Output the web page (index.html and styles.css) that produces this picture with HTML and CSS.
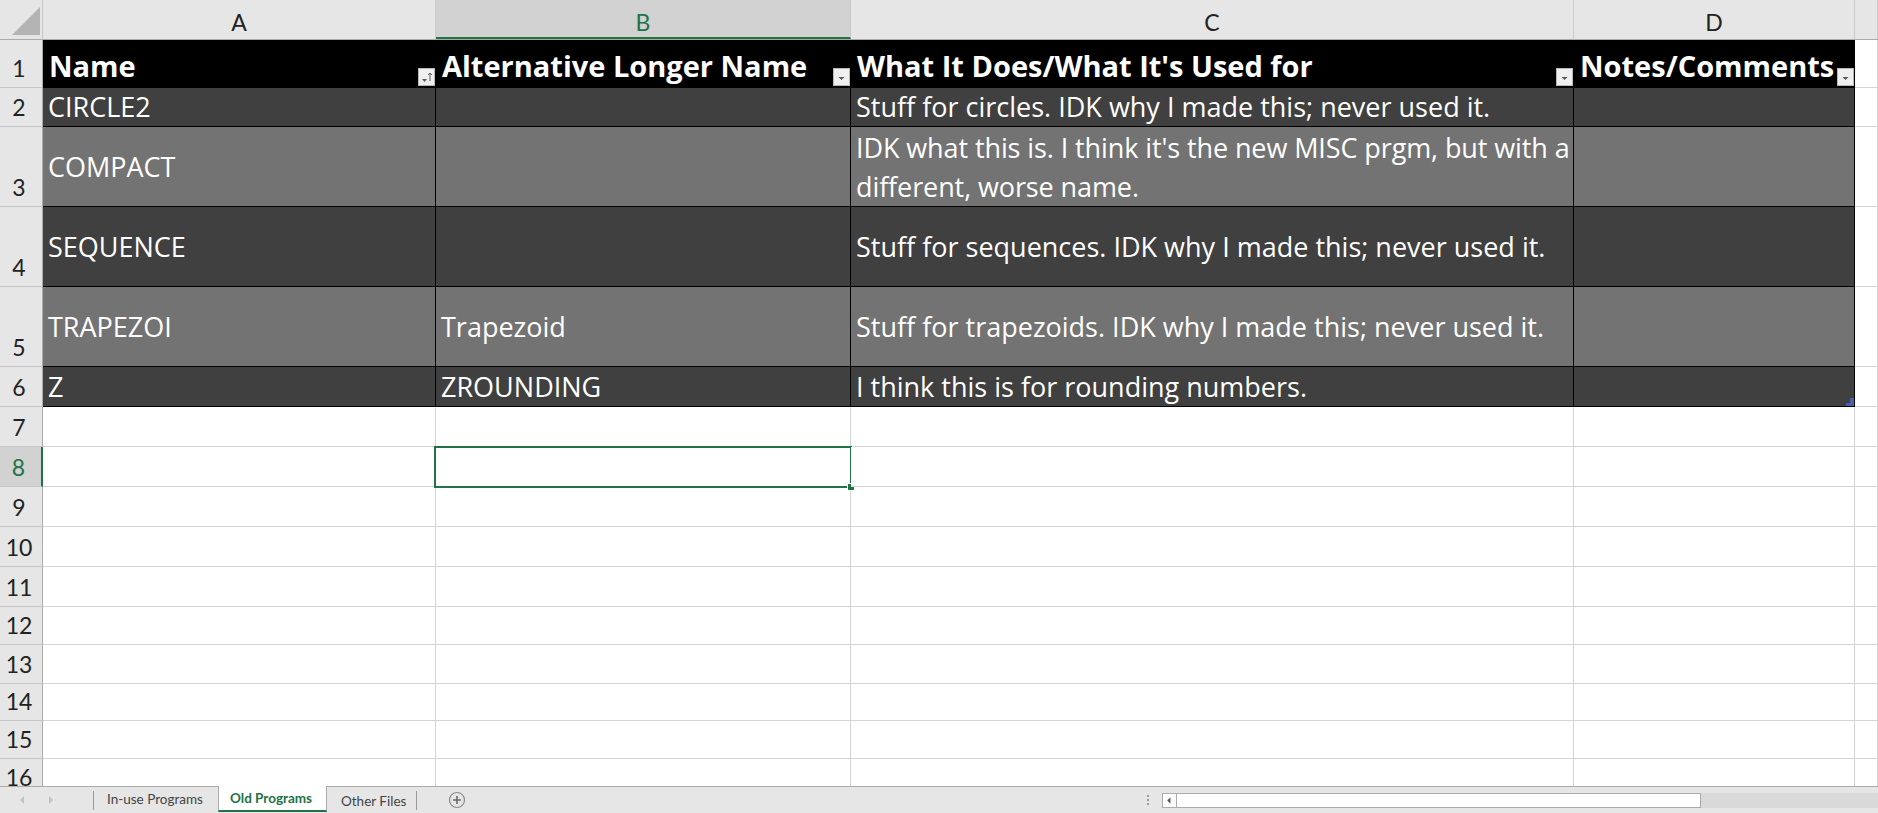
FILE: index.html
```html
<!DOCTYPE html>
<html>
<head>
<meta charset="utf-8">
<title>Old Programs</title>
<link rel="stylesheet" href="styles.css">
</head>
<body>
<div class="app">
  <div class="colheads">
    <div class="corner"><svg width="43" height="39" viewBox="0 0 43 39"><polygon points="12,35 40,35 40,7" fill="#b4b4b4"/></svg></div>
    <div class="ch">A</div>
    <div class="ch sel">B</div>
    <div class="ch">C</div>
    <div class="ch">D</div>
    <div class="ch"></div>
  </div>

  <div class="sheet">
    <div class="row h48">
      <div class="rh">1</div>
      <div class="c th">Name<span class="fbtn"><svg width="17" height="18" viewBox="0 0 17 18"><polygon points="4,11 9,11 6.5,14" fill="#5a5a5a"/><path d="M12 5 V13 M10 7 L12 5 L14 7" stroke="#5a5a5a" stroke-width="1" fill="none"/></svg></span></div>
      <div class="c th">Alternative Longer Name<span class="fbtn"><svg width="17" height="18" viewBox="0 0 17 18"><polygon points="5.5,9 11.5,9 8.5,12" fill="#5a5a5a"/></svg></span></div>
      <div class="c th">What It Does/What It's Used for<span class="fbtn"><svg width="17" height="18" viewBox="0 0 17 18"><polygon points="5.5,9 11.5,9 8.5,12" fill="#5a5a5a"/></svg></span></div>
      <div class="c th">Notes/Comments<span class="fbtn"><svg width="17" height="18" viewBox="0 0 17 18"><polygon points="5.5,9 11.5,9 8.5,12" fill="#5a5a5a"/></svg></span></div>
      <div class="c blank"></div>
    </div>

    <div class="row h39 dark">
      <div class="rh">2</div>
      <div class="c td">CIRCLE2</div>
      <div class="c td"></div>
      <div class="c td">Stuff for circles. IDK why I made this; never used it.</div>
      <div class="c td"></div>
      <div class="c blank"></div>
    </div>

    <div class="row h80 light mid">
      <div class="rh">3</div>
      <div class="c td">COMPACT</div>
      <div class="c td"></div>
      <div class="c td wrap"><p class="lines">IDK what this is. I think it's the new MISC prgm, but with a<br>different, worse name.</p></div>
      <div class="c td"></div>
      <div class="c blank"></div>
    </div>

    <div class="row h80 dark mid">
      <div class="rh">4</div>
      <div class="c td">SEQUENCE</div>
      <div class="c td"></div>
      <div class="c td">Stuff for sequences. IDK why I made this; never used it.</div>
      <div class="c td"></div>
      <div class="c blank"></div>
    </div>

    <div class="row h80 light mid">
      <div class="rh">5</div>
      <div class="c td">TRAPEZOI</div>
      <div class="c td">Trapezoid</div>
      <div class="c td">Stuff for trapezoids. IDK why I made this; never used it.</div>
      <div class="c td"></div>
      <div class="c blank"></div>
    </div>

    <div class="row h40 dark">
      <div class="rh">6</div>
      <div class="c td">Z</div>
      <div class="c td">ZROUNDING</div>
      <div class="c td">I think this is for rounding numbers.</div>
      <div class="c td"><span class="resize"><svg width="8" height="8" viewBox="0 0 8 8"><polygon points="4,0 8,0 8,8 0,8 0,5 4,5" fill="#4a5fb0"/></svg></span></div>
      <div class="c blank"></div>
    </div>

    <div class="row h40"><div class="rh">7</div><div class="c blank"></div><div class="c blank"></div><div class="c blank"></div><div class="c blank"></div><div class="c blank"></div></div>
    <div class="row h40"><div class="rh rsel">8</div><div class="c blank"></div><div class="c blank active"><span class="selbox"></span><span class="handle"></span></div><div class="c blank"></div><div class="c blank"></div><div class="c blank"></div></div>
    <div class="row h40"><div class="rh">9</div><div class="c blank"></div><div class="c blank"></div><div class="c blank"></div><div class="c blank"></div><div class="c blank"></div></div>
    <div class="row h40"><div class="rh">10</div><div class="c blank"></div><div class="c blank"></div><div class="c blank"></div><div class="c blank"></div><div class="c blank"></div></div>
    <div class="row h40"><div class="rh">11</div><div class="c blank"></div><div class="c blank"></div><div class="c blank"></div><div class="c blank"></div><div class="c blank"></div></div>
    <div class="row h38"><div class="rh">12</div><div class="c blank"></div><div class="c blank"></div><div class="c blank"></div><div class="c blank"></div><div class="c blank"></div></div>
    <div class="row h39"><div class="rh">13</div><div class="c blank"></div><div class="c blank"></div><div class="c blank"></div><div class="c blank"></div><div class="c blank"></div></div>
    <div class="row h37"><div class="rh">14</div><div class="c blank"></div><div class="c blank"></div><div class="c blank"></div><div class="c blank"></div><div class="c blank"></div></div>
    <div class="row h38"><div class="rh">15</div><div class="c blank"></div><div class="c blank"></div><div class="c blank"></div><div class="c blank"></div><div class="c blank"></div></div>
    <div class="row last"><div class="rh">16</div><div class="c blank"></div><div class="c blank"></div><div class="c blank"></div><div class="c blank"></div><div class="c blank"></div></div>
  </div>

  <div class="tabbar">
    <div class="nav">
      <svg width="93" height="26" viewBox="0 0 93 26"><polygon points="24,9 24,17 20,13" fill="#c4c4c4"/><polygon points="49,9 49,17 53,13" fill="#c4c4c4"/></svg>
    </div>
    <div class="tab t1">In-use Programs</div>
    <div class="tab on">Old Programs</div>
    <div class="tab t3">Other Files</div>
    <div class="addsheet"><svg width="18" height="18" viewBox="0 0 18 18"><circle cx="9" cy="9" r="7.5" fill="none" stroke="#8a8a8a" stroke-width="1.2"/><path d="M9 5 V13 M5 9 H13" stroke="#6a6a6a" stroke-width="1.6"/></svg></div>
    <div class="spacer"></div>
    <div class="dots"><span></span><span></span><span></span></div>
    <div class="hscroll">
      <div class="sbox"><div class="sarrow"><svg width="14" height="13" viewBox="0 0 14 13"><polygon points="8,3 8,10 4.5,6.5" fill="#555"/></svg></div><div class="sthumb"></div></div>
      <div class="strack"></div>
    </div>
  </div>
</div>
</body>
</html>
```

FILE: styles.css
```css
* { box-sizing: border-box; }
html, body { margin: 0; padding: 0; }
body {
  width: 1878px;
  height: 813px;
  overflow: hidden;
  background: #ffffff;
  font-family: "Lato", "Liberation Sans", sans-serif;
}
.app {
  display: flex;
  flex-direction: column;
  height: 813px;
}

/* column headers */
.colheads {
  display: grid;
  grid-template-columns: 43px 393px 415px 723px 281px 1fr;
  height: 40px;
  background: #e6e6e6;
  border-bottom: 1px solid #ababab;
}
.corner {
  border-right: 1px solid #c8c8c8;
}
.corner svg { display: block; }
.ch {
  display: flex;
  align-items: flex-end;
  justify-content: center;
  font-size: 23px;
  color: #222;
  padding-bottom: 2px;
  border-right: 1px solid #cbcbcb;
  line-height: 1.2;
}
.ch.sel {
  background: #d2d2d2;
  color: #217346;
  border-bottom: 2px solid #217346;
  padding-bottom: 0;
}

/* sheet rows */
.sheet {
  flex: 1;
  display: flex;
  flex-direction: column;
  overflow: hidden;
}
.row {
  display: grid;
  grid-template-columns: 43px 393px 415px 723px 281px 1fr;
  grid-template-rows: 100%;
  flex: none;
  overflow: hidden;
}
.h48 { height: 48px; }
.h40 { height: 40px; }
.h39 { height: 39px; }
.h38 { height: 38px; }
.h37 { height: 37px; }
.h80 { height: 80px; }
.last { flex: 1; height: auto; }

.rh {
  background: #e6e6e6;
  border-right: 1px solid #ababab;
  border-bottom: 1px solid #c6c6c6;
  display: flex;
  align-items: flex-end;
  justify-content: center;
  padding-right: 4px;
  padding-bottom: 4px;
  font-size: 23px;
  line-height: 1.2;
  color: #222;
}
.last .rh { align-items: flex-start; padding-top: 5px; border-bottom: none; }
.rh.rsel {
  background: #d2d2d2;
  color: #217346;
  border-right: 2px solid #217346;
}

.c {
  position: relative;
  border-right: 1px solid #000;
  border-bottom: 1px solid #000;
  display: flex;
  align-items: flex-end;
  color: #fff;
  white-space: nowrap;
  font-family: "Open Sans", "Lato", sans-serif;
  min-width: 0;
}
.c.blank {
  border-right: 1px solid #d4d4d4;
  border-bottom: 1px solid #d4d4d4;
  background: #fff;
}
.last .c.blank { border-bottom: none; }

.th {
  background: #000;
  font-weight: 700;
  font-size: 29px;
  line-height: 36px;
  padding: 0 0 3px 6px;
}
.td {
  font-size: 27px;
  line-height: 38px;
  padding: 0 0 0 5px;
}
.dark .td { background: #404040; }
.light .td { background: #737373; }
.mid .td { align-items: center; padding-bottom: 0; }
.lines {
  margin: 0;
  line-height: 39px;
  white-space: nowrap;
  letter-spacing: -0.1px;
}

/* filter buttons */
.fbtn {
  position: absolute;
  right: 0;
  bottom: 1px;
  width: 17px;
  height: 18px;
  background: #efefef;
  border: 1px solid #b8b8b8;
}
.fbtn svg { display: block; position: absolute; left: -1px; top: -1px; }

/* table resize handle */
.resize {
  position: absolute;
  right: 0;
  bottom: 0;
  width: 8px;
  height: 8px;
}
.resize svg { display: block; }

/* selection */
.selbox {
  position: absolute;
  left: -2px;
  top: -1px;
  right: -2px;
  bottom: -2px;
  border: 2px solid #217346;
}
.handle {
  position: absolute;
  right: -5px;
  bottom: -5px;
  width: 8px;
  height: 8px;
  background: #217346;
  border: 1px solid #fff;
}
.row:has(.active) { overflow: visible; position: relative; z-index: 2; }

/* tab bar */
.tabbar {
  height: 27px;
  flex: none;
  display: flex;
  align-items: flex-start;
  background: #e6e6e6;
  border-top: 1px solid #ababab;
  font-size: 13.5px;
  color: #444;
  white-space: nowrap;
}
.nav {
  width: 94px;
  height: 26px;
  display: flex;
  align-items: center;
  position: relative;
}
.nav svg { display: block; }
.nav::after {
  content: "";
  position: absolute;
  right: 0;
  top: 4px;
  bottom: 3px;
  border-right: 1px solid #9a9a9a;
}
.tab {
  display: flex;
  align-items: center;
  height: 24px;
}
.tab.t1 { width: 124px; padding-left: 13px; }
.tab.on {
  width: 109px;
  margin-top: -1px;
  height: 26px;
  background: #fff;
  color: #217346;
  font-weight: 700;
  padding-left: 11px;
  border-bottom: 2px solid #217346;
  border-left: 1px solid #ababab;
  border-right: 1px solid #ababab;
}
.tab.t3 {
  width: 90px;
  padding-left: 14px;
  margin-top: 4px;
  height: 19px;
  border-right: 1px solid #9a9a9a;
}
.addsheet {
  width: 51px;
  height: 26px;
  display: flex;
  align-items: center;
  justify-content: flex-end;
  padding-right: 2px;
}
.addsheet svg { display: block; }
.spacer { flex: 1; }
.dots {
  width: 15px;
  height: 26px;
  display: flex;
  flex-direction: column;
  justify-content: center;
  gap: 2px;
}
.dots span {
  display: block;
  width: 2px;
  height: 2px;
  background: #9a9a9a;
}
.hscroll {
  width: 716px;
  height: 26px;
  display: flex;
  align-items: center;
  padding-top: 1px;
}
.sbox {
  width: 539px;
  height: 15px;
  display: flex;
  border: 1px solid #ababab;
  background: #fff;
}
.sarrow {
  width: 14px;
  border-right: 1px solid #ababab;
  display: flex;
  align-items: center;
}
.sarrow svg { display: block; }
.sthumb { flex: 1; }
.strack {
  flex: 1;
  height: 15px;
  background: #d9d9d9;
}
```
